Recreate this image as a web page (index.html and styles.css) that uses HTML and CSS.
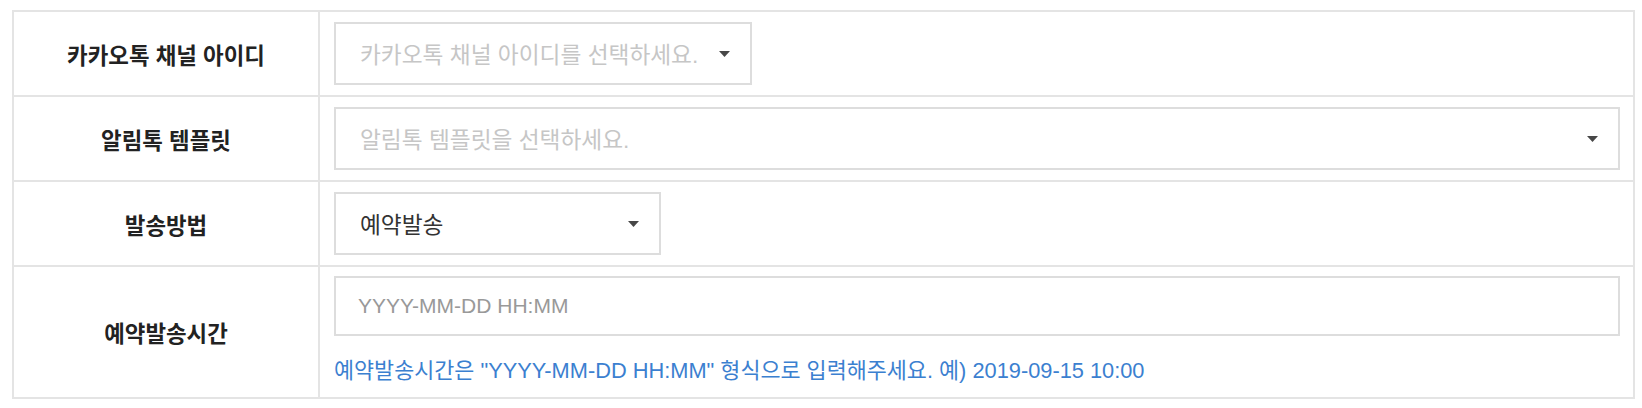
FILE: index.html
```html
<!DOCTYPE html>
<html lang="ko">
  <head>
    <meta charset="UTF-8" />
    <meta name="viewport" content="width=device-width, initial-scale=1.0" />
    <title>알림톡 발송</title>
    <link rel="stylesheet" href="styles.css">
  </head>
  <body>
    <div class="wrap">
      <table class="form-table">
        <tr>
          <th>카카오톡 채널 아이디</th>
          <td>
            <div class="select-box select-channel is-empty">
              <span>카카오톡 채널 아이디를 선택하세요.</span>
              <svg class="arrow" width="11" height="6" viewBox="0 0 11 6"><path d="M0 0H11L5.5 6Z" /></svg>
            </div>
          </td>
        </tr>
        <tr>
          <th>알림톡 템플릿</th>
          <td>
            <div class="select-box is-empty">
              <span>알림톡 템플릿을 선택하세요.</span>
              <svg class="arrow" width="11" height="6" viewBox="0 0 11 6"><path d="M0 0H11L5.5 6Z" /></svg>
            </div>
          </td>
        </tr>
        <tr>
          <th>발송방법</th>
          <td>
            <div class="select-box select-method">
              <span>예약발송</span>
              <svg class="arrow" width="11" height="6" viewBox="0 0 11 6"><path d="M0 0H11L5.5 6Z" /></svg>
            </div>
          </td>
        </tr>
        <tr>
          <th>예약발송시간</th>
          <td class="time-cell">
            <input type="text" class="text-input" placeholder="YYYY-MM-DD HH:MM" />
            <p class="help">예약발송시간은 "YYYY-MM-DD HH:MM" 형식으로 입력해주세요. 예) 2019-09-15 10:00</p>
          </td>
        </tr>
      </table>
    </div>
  </body>
</html>
```

FILE: styles.css
```css
* {
  box-sizing: border-box;
  margin: 0;
  padding: 0;
}

body {
  font-family: "Liberation Sans", "Noto Sans CJK KR", sans-serif;
  font-size: 22.7px;
  color: #333;
  background-color: #fff;
}

.wrap {
  padding: 10px 7px 0 12px;
}

.form-table {
  width: 100%;
  border-collapse: separate;
  border-spacing: 0;
  table-layout: fixed;
  border-top: 2px solid #e4e4e4;
  border-left: 2px solid #e4e4e4;
}

.form-table th,
.form-table td {
  border-right: 2px solid #e4e4e4;
  border-bottom: 2px solid #e4e4e4;
  vertical-align: middle;
}

.form-table th {
  width: 306px;
  font-size: 22.4px;
  font-weight: bold;
  color: #222;
  text-align: center;
}

.form-table td {
  padding: 10px 13px 10px 14px;
}

.select-box {
  display: flex;
  align-items: center;
  justify-content: space-between;
  height: 63px;
  padding: 0 20px 0 24px;
  border: 2px solid #dddddd;
  background-color: #fff;
  color: #333;
}

.select-box.is-empty {
  color: #c6c6c6;
}

.select-channel {
  width: 418px;
}

.select-method {
  width: 327px;
}

.arrow {
  flex-shrink: 0;
}

.arrow path {
  fill: #474747;
}

.form-table td.time-cell {
  padding-top: 9px;
  padding-bottom: 11px;
}

.text-input {
  display: block;
  width: 100%;
  height: 60px;
  padding: 0 22px;
  border: 2px solid #dddddd;
  font-family: inherit;
  font-size: 21px;
  color: #333;
  outline: none;
}

.text-input::placeholder {
  color: #999;
}

.help {
  margin-top: 20px;
  font-size: 21.8px;
  line-height: 30px;
  color: #3b80d0;
}
```
